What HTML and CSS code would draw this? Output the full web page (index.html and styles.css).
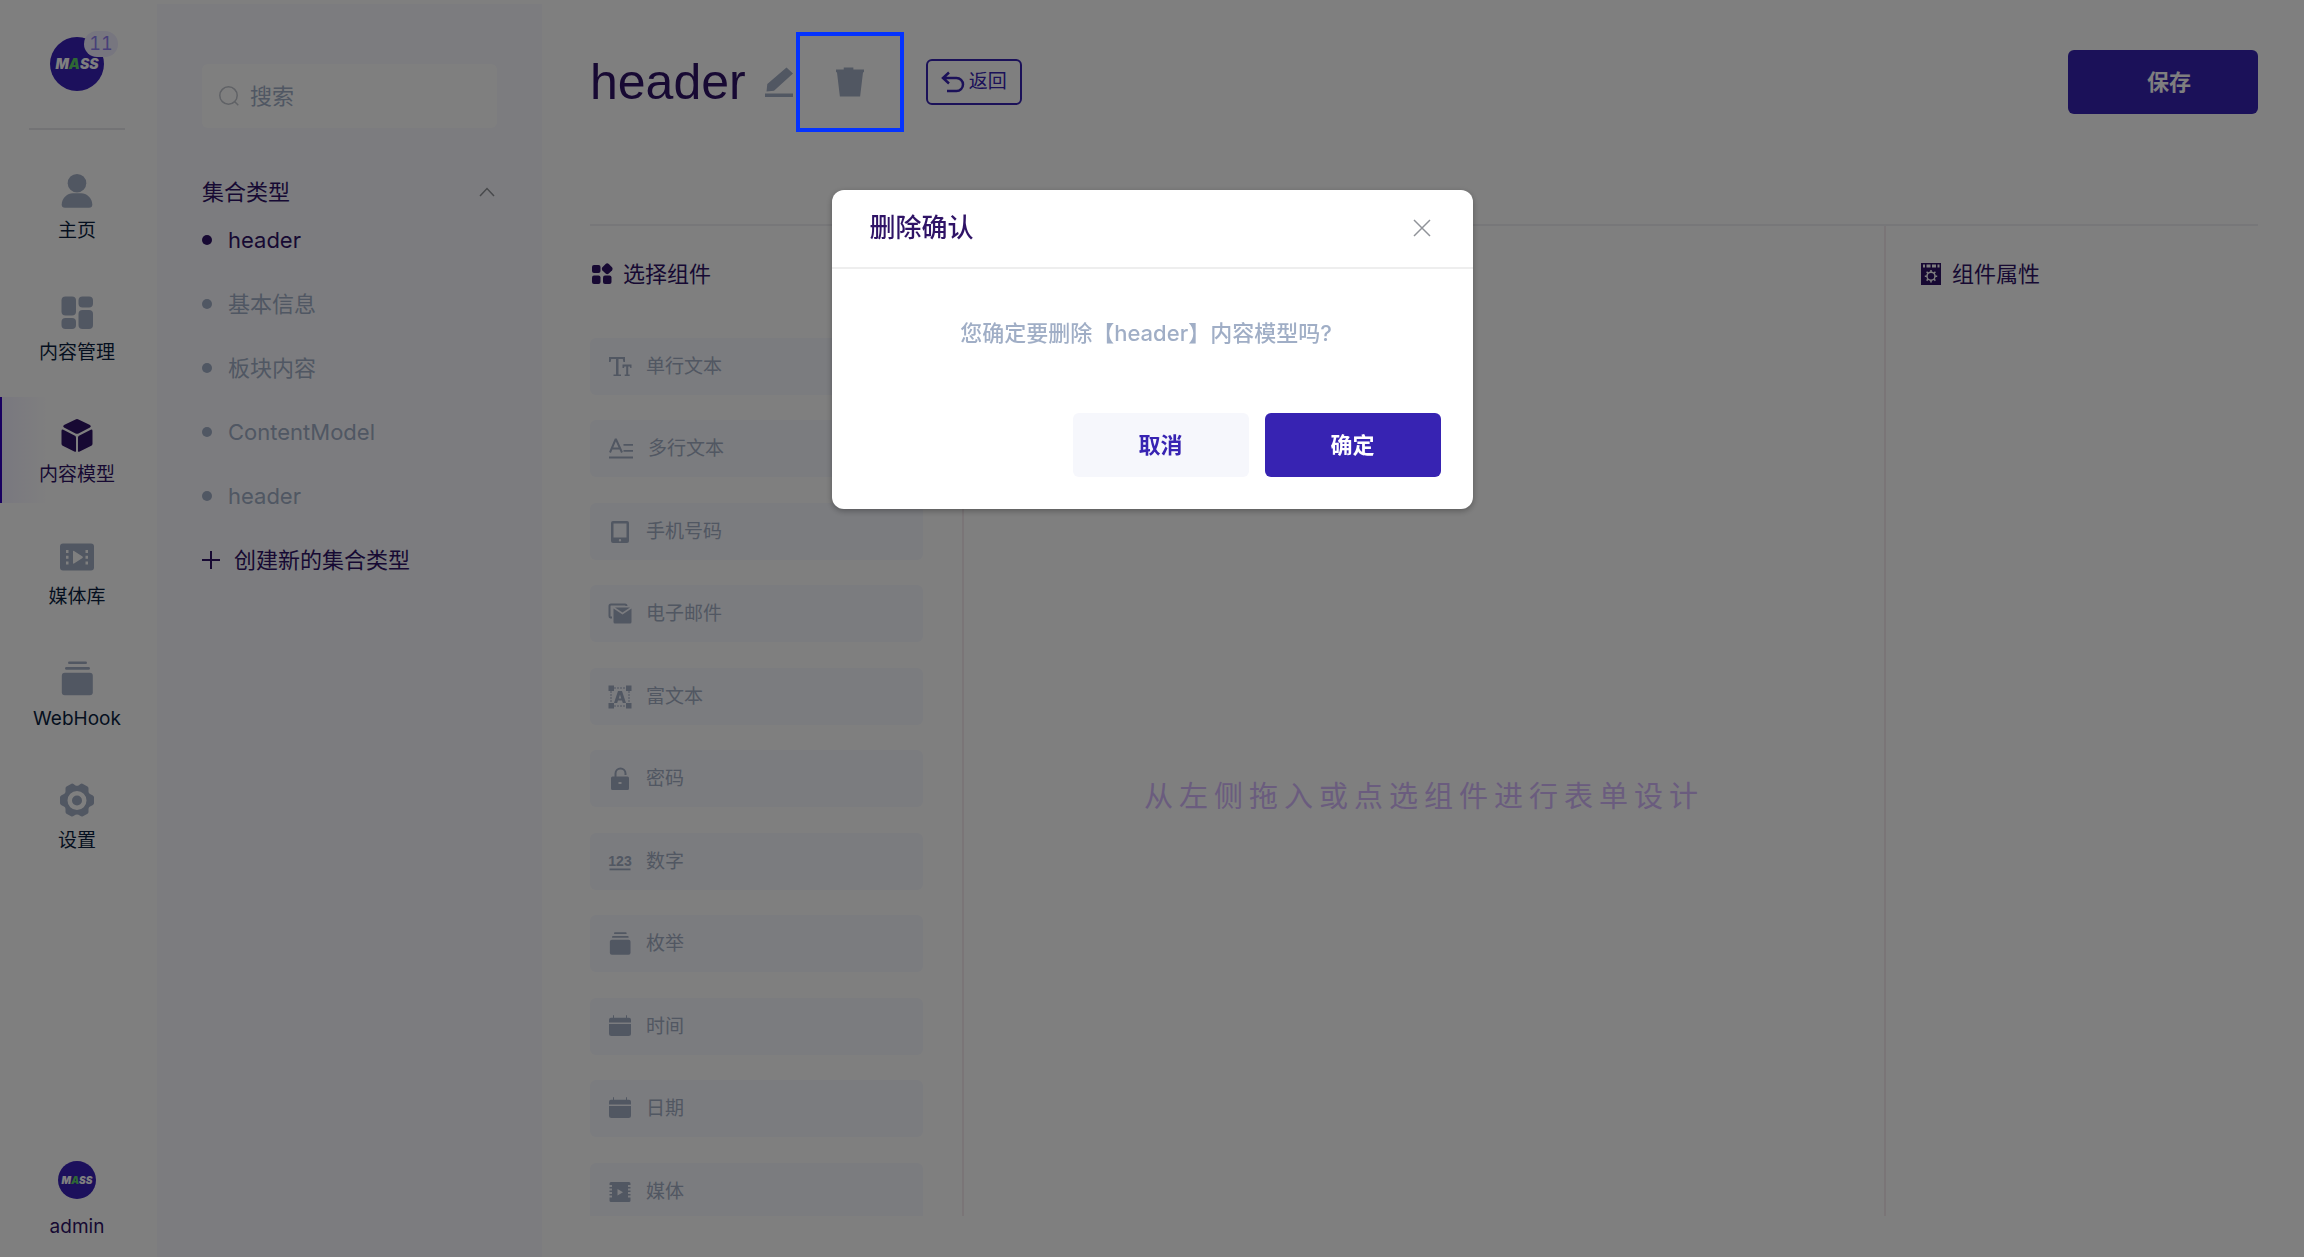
FILE: index.html
```html
<!DOCTYPE html>
<html lang="zh-CN">
<head>
    <meta charset="UTF-8">
    <meta name="viewport" content="width=device-width, initial-scale=1">
    <title>内容模型</title>
    <link rel="stylesheet" href="styles.css">
</head>
<body>
    <svg class="sprite" aria-hidden="true">
        <symbol id="icon-stack" viewBox="0 0 36 36">
            <rect x="9" y="0.5" width="19" height="2.6" rx="1.3"/>
            <rect x="6" y="6" width="25" height="2.8" rx="1.4"/>
            <rect x="2.8" y="11.8" width="31" height="22.5" rx="3"/>
        </symbol>
        <symbol id="icon-calendar" viewBox="0 0 24 24">
            <path d="M1 7.400V4.800a2 2 0 0 1 2-2h2V.3h1v2.500h12V.3h1v2.500h2a2 2 0 0 1 2 2v2.600z"/>
            <path d="M1 9h22v9.400a2.500 2.500 0 0 1-2.500 2.500h-17A2.500 2.500 0 0 1 1 18.400z"/>
        </symbol>
    </svg>

    <div class="app">
        <nav class="rail">
            <a href="#" class="brand">
                <span class="logo">M<i>A</i>SS</span>
                <span class="badge">11</span>
            </a>
            <div class="rail-menu">
                <a href="#" class="rail-item">
                    <svg class="rail-icon" viewBox="0 0 36 36"><circle cx="18" cy="10.2" r="9.3"/><path d="M2.7 31.5c0-6.5 6-11.3 11-11.3h8.6c5 0 11 4.8 11 11.3 0 2.4-1 3.3-3.3 3.3H6c-2.300 0-3.300-.9-3.300-3.300z"/></svg>
                    <span>主页</span>
                </a>
                <a href="#" class="rail-item">
                    <svg class="rail-icon" viewBox="0 0 36 36"><rect x="2.500" y="1.500" width="14.500" height="19" rx="4"/><rect x="19.500" y="1.500" width="14.500" height="11" rx="4"/><rect x="19.500" y="15" width="14.500" height="19" rx="4"/><rect x="2.500" y="23" width="14.500" height="11" rx="4"/></svg>
                    <span>内容管理</span>
                </a>
                <a href="#" class="rail-item active">
                    <svg class="rail-icon" viewBox="0 0 36 36"><path d="M16.500 2.500q1.500-.8 3 0l11.500 5.500q1.800 1.200 0 2.400l-11.500 6q-1.500.8-3 0L5 10.400q-1.800-1.200 0-2.400z"/><path d="M2.500 14q0-2 1.800-1.200L16 18.800q1 .6 1 1.800V34q0 1.200-1.200.7L3.700 28.800q-1.200-.7-1.200-2z"/><path d="M33.500 14q0-2-1.800-1.200L20 18.800q-1 .6-1 1.800V34q0 1.200 1.200.7l12.100-5.900q1.200-.7 1.200-2z"/></svg>
                    <span>内容模型</span>
                </a>
                <a href="#" class="rail-item">
                    <svg class="rail-icon" viewBox="0 0 36 36"><path fill-rule="evenodd" d="M4 4.500h28a3 3 0 0 1 3 3v21a3 3 0 0 1-3 3H4a3 3 0 0 1-3-3v-21a3 3 0 0 1 3-3zM14 12.500v11.500q0 1 1 .5l8.500-5.500q.8-.7 0-1.400L15 12q-1-.5-1 .5zM7 11v3h2.500v-3zM7 16.800v3h2.500v-3zM7 22.500v3h2.500v-3zM26.500 11v3H29v-3zM26.500 16.800v3H29v-3zM26.500 22.500v3H29v-3z"/></svg>
                    <span>媒体库</span>
                </a>
                <a href="#" class="rail-item">
                    <svg class="rail-icon"><use href="#icon-stack"/></svg>
                    <span>WebHook</span>
                </a>
                <a href="#" class="rail-item">
                    <svg class="rail-icon" viewBox="0 0 36 36"><path fill-rule="evenodd" d="M12.500.8q1-.5 2 .3l2 1.300q1.500.8 3 0l2-1.300q1-.8 2-.3l5 2.700q1 .7 1 2v3q0 1.700 1.500 2.500l2.500 1.200q1.500.8 1.500 2v6q0 1.200-1.500 2L31 23.400q-1.500.8-1.500 2.500v2.800q0 1.300-1 2l-5 2.700q-1 .5-2-.3l-2-1.300q-1.500-.8-3 0l-2 1.300q-1 .8-2 .3l-5-2.700q-1-.7-1-2v-2.800q0-1.700-1.500-2.500l-2.500-1.200q-1.500-.8-1.500-2v-6q0-1.200 1.500-2L5 11q1.500-.8 1.500-2.500v-3q0-1.300 1-2zM18 8a9.500 9.500 0 1 0 0 19a9.500 9.500 0 1 0 0-19z"/><circle cx="18" cy="17.500" r="5"/></svg>
                    <span>设置</span>
                </a>
            </div>
            <a href="#" class="account">
                <span class="logo logo-small">M<i>A</i>SS</span>
                <span>admin</span>
            </a>
        </nav>

        <aside class="sidebar">
            <label class="search">
                <svg class="search-icon" viewBox="0 0 20 20"><circle cx="9.500" cy="9.500" r="8.700"/><path d="M15.500 15.500l3.800 3.800"/></svg>
                <input type="text" placeholder="搜索" aria-label="搜索">
            </label>
            <button class="group-title" type="button">
                集合类型
                <svg class="chevron" viewBox="0 0 16 10"><path d="M1 9l7-7.500L15 9"/></svg>
            </button>
            <ul class="type-list">
                <li><a href="#" class="current">header</a></li>
                <li><a href="#">基本信息</a></li>
                <li><a href="#">板块内容</a></li>
                <li><a href="#">ContentModel</a></li>
                <li><a href="#">header</a></li>
            </ul>
            <button class="create" type="button">
                <svg class="plus" viewBox="0 0 18 18"><path d="M9 0v18M0 9h18"/></svg>
                创建新的集合类型
            </button>
        </aside>

        <main class="main">
            <header class="page-header">
                <h1>header</h1>
                <button class="icon-btn edit" type="button" aria-label="编辑">
                    <svg viewBox="0 0 28 30"><path d="M0 26.500h28V30H0zM1.500 24.500l.8-7.500L21.500 0.500 28 6.500 9 23.800z"/></svg>
                </button>
                <div class="delete-wrap">
                    <button class="icon-btn" type="button" aria-label="删除">
                        <svg viewBox="0 0 29 30"><path d="M0 2h8V0h10v2h11v3H0zM1 5h27l-3 25H4z"/></svg>
                    </button>
                    <span class="highlight"></span>
                </div>
                <button class="back" type="button">
                    <svg viewBox="0 0 24 22"><path d="M8 1.500L2 7l6 5.500M2 7h13.500a6.500 6.500 0 0 1 0 13H6"/></svg>
                    返回
                </button>
                <button class="btn primary save" type="button">保存</button>
            </header>

            <div class="designer">
                <section class="panel components">
                    <h2>
                        <svg viewBox="0 0 22 22"><rect x="1" y="2" width="8.500" height="8" rx="2"/><rect x="1" y="12.500" width="8.500" height="8.500" rx="2"/><rect x="12" y="12.500" width="8.500" height="8.500" rx="2"/><path d="M14.600 1q1.600-1.300 3.200 0l3.200 3.200q1.200 1.600 0 3.200l-3.200 3.200q-1.600 1.200-3.200 0l-3.200-3.200q-1.200-1.600 0-3.200z"/></svg>
                        选择组件
                    </h2>
                    <ul class="component-list">
                        <li><button type="button"><svg viewBox="0 0 24 24"><path d="M1 2h16v5h-1.600l-.6-3h-4.300v15.500H13V21H5.500v-1.500H8V4H3.200l-.6 3H1zM14.500 9.500h9V13h-1.200l-.4-1.600h-1.700v8.100h1.500V21h-5v-1.500h1.500v-8.100h-1.800l-.4 1.600h-1.500z"/></svg>单行文本</button></li>
                        <li><button type="button"><svg class="wide" viewBox="0 0 26 24"><path d="M1 19.500h24v2H1zM15.500 7H25v1.700h-9.500zM15.500 13H25v1.700h-9.500z"/><path class="line" d="M2 15.500L7.500 2.500h.6L14 15.500M4 11.500h8"/></svg>多行文本</button></li>
                        <li><button type="button"><svg viewBox="0 0 24 24"><path fill-rule="evenodd" d="M5 1h14a2 2 0 0 1 2 2v18a2 2 0 0 1-2 2H5a2 2 0 0 1-2-2V3a2 2 0 0 1 2-2zM5.500 3.500v14h13v-14zM12 19a1.200 1.200 0 1 0 0 2.400a1.200 1.200 0 1 0 0-2.400z"/></svg>手机号码</button></li>
                        <li><button type="button"><svg viewBox="0 0 24 24"><path class="line" d="M4 15.500H2.500q-1-.2-1-1.500V4q0-1.500 1.500-1.500h14q1.500 0 1.500 1.500"/><path d="M5.500 6.500l9 6 9-6V20q0 1.500-1.500 1.500H7q-1.500 0-1.500-1.500z"/><path d="M7 5.500h15l-7.500 5z"/></svg>电子邮件</button></li>
                        <li><button type="button"><svg viewBox="0 0 24 24"><path d="M.5.500H6V6H.5zM18 .5h5.500V6H18zM.5 18H6v5.500H.5zM18 18h5.500v5.500H18z"/><path class="dashed" d="M6 3h12M6 21h12M3 6v12M21 6v12"/><path fill-rule="evenodd" d="M10 6h4l4 12h-3.200l-.8-2.500h-4L9.200 18H6zM12 9.500l-1.200 4h2.400z"/></svg>富文本</button></li>
                        <li><button type="button"><svg viewBox="0 0 24 24"><path class="line" d="M7.500 10V6.500a5 5 0 0 1 10 0V8"/><path fill-rule="evenodd" d="M4.500 9.500h15q1.500 0 1.500 1.500v10.500q0 1.500-1.500 1.500h-15Q3 23 3 21.500V11q0-1.500 1.500-1.500zM10.500 15v2h3v-2z"/></svg>密码</button></li>
                        <li><button type="button"><svg viewBox="0 0 24 24"><text x="12" y="16">123</text><path d="M1.500 18.500h21v1.800h-21z"/></svg>数字</button></li>
                        <li><button type="button"><svg><use href="#icon-stack"/></svg>枚举</button></li>
                        <li><button type="button"><svg><use href="#icon-calendar"/></svg>时间</button></li>
                        <li><button type="button"><svg><use href="#icon-calendar"/></svg>日期</button></li>
                        <li><button type="button"><svg viewBox="0 0 24 24"><path fill-rule="evenodd" d="M3 2h18q1.500 0 1.500 1.500V5H20v2h2.500v1.500H20v2h2.500V12H20v2h2.500v1.500H20v2h2.500v3q0 1.500-1.500 1.500H3q-1.500 0-1.500-1.500v-3H4v-2H1.500V14H4v-2H1.500v-1.500H4v-2H1.500V7H4V5H1.500V3.500Q1.500 2 3 2zM9.500 9v6.500l5.500-3.200z"/></svg>媒体</button></li>
                    </ul>
                </section>
                <section class="panel canvas">
                    <p>从左侧拖入或点选组件进行表单设计</p>
                </section>
                <section class="panel properties">
                    <h2>
                        <svg viewBox="0 0 22 22"><path fill-rule="evenodd" d="M1 0h20v22H1zM3 1.500v3h2v-3zM6.500 1.500v3h4v-3zM12 1.500v3h4v-3zM17.500 1.500v3h2v-3z"/><circle class="cog" cx="11" cy="13.200" r="4"/><path class="cog" d="M11 7v2M11 17.400v2M4.800 13.200h2M15.200 13.200h2M6.600 8.800l1.400 1.400M14 16.200l1.400 1.400M15.400 8.800L14 10.200M8 16.200l-1.400 1.400"/></svg>
                        组件属性
                    </h2>
                </section>
            </div>
        </main>
    </div>

    <div class="overlay">
        <div class="dialog" role="dialog" aria-modal="true" aria-labelledby="dialog-title">
            <div class="dialog-header">
                <h2 id="dialog-title">删除确认</h2>
                <button class="close" type="button" aria-label="关闭">
                    <svg viewBox="0 0 18 18"><path d="M1 1l16 16M17 1L1 17"/></svg>
                </button>
            </div>
            <p class="dialog-body">您确定要删除【header】内容模型吗?</p>
            <div class="dialog-footer">
                <button class="btn" type="button">取消</button>
                <button class="btn primary" type="button">确定</button>
            </div>
        </div>
    </div>
</body>
</html>
```
FILE: styles.css
```css
* {
    box-sizing: border-box;
}
body {
    margin: 0;
    background-color: #fff;
    color: #2f1366;
    font-family: "Inter", "Noto Sans CJK SC", sans-serif;
    font-size: 22px;
    line-height: 32px;
}
h1, h2, p, ul {
    margin: 0;
    padding: 0;
    font-weight: 400;
}
ul {
    list-style: none;
}
a {
    color: inherit;
    text-decoration: none;
}
button, input {
    margin: 0;
    padding: 0;
    border: none;
    background: none;
    color: inherit;
    font: inherit;
}
button {
    cursor: pointer;
}
svg {
    display: block;
    flex: none;
    fill: currentColor;
}
.sprite {
    position: absolute;
    width: 0;
    height: 0;
}
.app {
    display: flex;
    height: 100vh;
}

/* left rail */
.rail {
    display: flex;
    flex-direction: column;
    flex: none;
    align-items: center;
    width: 157px;
    padding: 37px 3px 16px 0;
    color: #0a1e3e;
    font-size: 19px;
    line-height: 28px;
}
.brand {
    position: relative;
}
.logo {
    display: flex;
    align-items: center;
    justify-content: center;
    width: 54px;
    height: 54px;
    border-radius: 50%;
    background-color: #3820b8;
    color: #fff;
    font-size: 14px;
    font-style: italic;
    font-weight: 900;
}
.logo i {
    color: #5fd068;
}
.logo-small {
    width: 38px;
    height: 38px;
    font-size: 10px;
}
.badge {
    position: absolute;
    top: -6px;
    right: -14px;
    width: 34px;
    border-radius: 13px;
    background-color: #eeecff;
    color: #9080f0;
    font-size: 18px;
    font-variant-numeric: tabular-nums;
    line-height: 26px;
    text-align: center;
}
.rail-menu {
    display: flex;
    flex-direction: column;
    gap: 16px;
    width: 100%;
    margin-top: 62px;
}
.rail-menu::before {
    content: "";
    width: 96px;
    height: 2px;
    margin: -25px auto 7px;
    background-color: #e6e6ea;
}
.rail-item {
    display: flex;
    flex-direction: column;
    align-items: center;
    gap: 8px;
    height: 106px;
    padding-top: 20px;
}
.rail-icon {
    width: 36px;
    height: 36px;
    color: #a3aec4;
}
.rail-item.active {
    background: linear-gradient(90deg, #f2f0ff, #fff 50px);
    box-shadow: inset 2px 0 #3300c0;
    color: #2f1366;
}
.active .rail-icon {
    color: #2f1366;
}
.account {
    display: flex;
    flex-direction: column;
    align-items: center;
    gap: 14px;
    margin-top: auto;
    color: #2f1366;
}

/* collection types */
.sidebar {
    flex: none;
    width: 385px;
    margin-top: 4px;
    padding: 60px 45px;
    background-color: #f9f9fe;
}
.search {
    display: flex;
    align-items: center;
    gap: 11px;
    height: 64px;
    padding: 0 17px;
    border-radius: 6px;
    background-color: #fff;
}
.search-icon {
    width: 20px;
    height: 20px;
    fill: none;
    stroke: #c0c4cc;
    stroke-width: 1.5;
}
.search input {
    flex: 1;
    min-width: 0;
    outline: none;
}
.search input::placeholder {
    color: #a0aec6;
    opacity: 1;
}
.group-title {
    display: flex;
    align-items: center;
    justify-content: space-between;
    width: 100%;
    margin-top: 48px;
    padding-right: 2px;
}
.chevron {
    width: 16px;
    height: 10px;
    fill: none;
    stroke: #909399;
    stroke-width: 1.5;
}
.type-list a {
    display: flex;
    align-items: center;
    gap: 16px;
    height: 64px;
    color: #a0aec6;
}
.type-list a::before {
    content: "";
    width: 10px;
    height: 10px;
    border-radius: 50%;
    background-color: currentColor;
}
.type-list .current {
    color: #2f1366;
}
.create {
    display: flex;
    align-items: center;
    gap: 14px;
    height: 64px;
}
.plus {
    width: 18px;
    height: 18px;
    stroke: currentColor;
    stroke-width: 2;
}

/* main area */
.main {
    display: flex;
    flex: 1;
    flex-direction: column;
    min-width: 0;
    padding: 50px 46px 41px 48px;
}
.page-header {
    display: flex;
    align-items: center;
    height: 64px;
    margin-bottom: 110px;
}
h1 {
    font-family: "Liberation Sans", sans-serif;
    font-size: 50px;
    line-height: 64px;
}
.icon-btn {
    color: #a3aec4;
}
.icon-btn svg {
    width: 28px;
    height: 30px;
}
.edit {
    margin-left: 19px;
}
.delete-wrap {
    position: relative;
    display: flex;
    margin: 0 62px 0 43px;
}
.highlight {
    position: absolute;
    inset: -35px -40px;
    z-index: 20;
    border: 4px solid #0433ff;
    pointer-events: none;
}
.back {
    display: flex;
    align-items: center;
    gap: 4px;
    height: 46px;
    padding: 0 13px;
    border: 2px solid #3723b2;
    border-radius: 6px;
    color: #3723b2;
    font-size: 19px;
}
.back svg {
    width: 24px;
    height: 22px;
    fill: none;
    stroke: currentColor;
    stroke-width: 2.5;
}
.btn {
    width: 176px;
    height: 64px;
    border-radius: 6px;
    background-color: #f6f7fc;
    color: #3723b2;
    font-weight: 700;
}
.primary {
    background-color: #3723b2;
    color: #fff;
}
.save {
    width: 190px;
    margin-left: auto;
    padding-left: 12px;
}
.designer {
    display: flex;
    flex: 1;
    min-height: 0;
    border-top: 2px solid #efeff2;
}
.panel h2 {
    display: flex;
    align-items: center;
    gap: 10px;
    font-size: 22px;
    line-height: 32px;
}
.panel h2 svg {
    width: 22px;
    height: 22px;
}
.components {
    width: 374px;
    padding-top: 32px;
    overflow: hidden;
    border-right: 2px solid #f4eaee;
}
.components h2 {
    padding-left: 1px;
}
.component-list {
    margin: 48px 39px 0 0;
}
.component-list button {
    display: flex;
    align-items: center;
    gap: 14px;
    width: 100%;
    height: 57px;
    margin-bottom: 25px;
    padding-left: 18px;
    border-radius: 6px;
    background-color: #f6f8ff;
    color: #a3aec4;
    font-size: 19px;
}
.component-list li:nth-child(even) button {
    margin-bottom: 26px;
}
.component-list svg {
    width: 24px;
    height: 24px;
}
.component-list .wide {
    width: 26px;
}
.component-list .line {
    fill: none;
    stroke: currentColor;
    stroke-width: 2;
}
.component-list .dashed {
    fill: none;
    stroke: currentColor;
    stroke-dasharray: 2 1;
}
.component-list text {
    font-family: "Liberation Sans", sans-serif;
    font-size: 14px;
    font-weight: 700;
    text-anchor: middle;
}
.canvas {
    display: flex;
    flex: 1;
    align-items: center;
    justify-content: center;
    min-width: 0;
    padding-top: 151px;
}
.canvas p {
    color: #d4b8fc;
    font-size: 29px;
    letter-spacing: 6px;
}
.properties {
    width: 374px;
    padding: 32px 34px;
    border-left: 2px solid #f4eaee;
}
.properties .cog {
    fill: none;
    stroke: #fff;
    stroke-width: 1.5;
}

/* delete confirmation */
.overlay {
    position: fixed;
    inset: 0;
    z-index: 10;
    padding-top: 190px;
    background-color: rgba(0, 0, 0, .5);
}
.dialog {
    width: 641px;
    margin: 0 auto;
    border-radius: 12px;
    background-color: #fff;
    box-shadow: 0 2px 6px rgba(0, 0, 0, .3);
}
.dialog-header {
    display: flex;
    align-items: center;
    justify-content: space-between;
    height: 79px;
    padding: 0 42px 2px 38px;
    border-bottom: 2px solid #eee;
}
.dialog-header h2 {
    font-size: 26px;
    font-weight: 500;
}
.close svg {
    width: 18px;
    height: 18px;
    stroke: #909399;
    stroke-width: 1.5;
}
.dialog-body {
    padding: 48px 44px 64px 32px;
    color: #a0aec6;
    font-weight: 500;
    text-align: center;
}
.dialog-footer {
    display: flex;
    justify-content: flex-end;
    gap: 16px;
    padding: 0 32px 32px;
}
```
